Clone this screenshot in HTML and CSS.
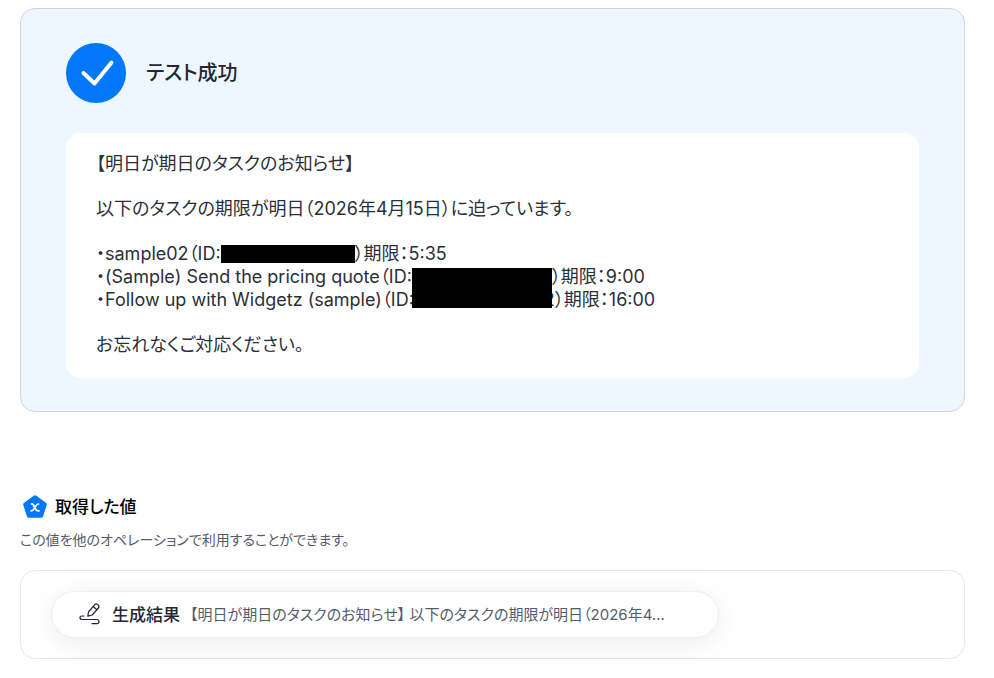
FILE: index.html
```html
<!DOCTYPE html>
<html lang="ja">
<head>
    <meta charset="UTF-8">
    <meta name="viewport" content="width=device-width, initial-scale=1.0">
    <title>テスト結果</title>
    <link rel="stylesheet" href="styles.css">
</head>
<body>
    <main>
        <section class="result">
            <div class="result-head">
                <svg class="icon-check" viewBox="0 0 60 60" aria-hidden="true">
                    <circle cx="30" cy="30" r="30" fill="#0277f7"/>
                    <path d="M17.500 30 L28.500 40.500 L45.500 19.500" fill="none" stroke="#fff" stroke-width="4" stroke-linecap="round" stroke-linejoin="round"/>
                </svg>
                <h1 class="result-title">テスト成功</h1>
            </div>
            <div class="message">
                <p>【明日が期日のタスクのお知らせ】</p>
                <p>以下のタスクの期限が明日（2026年4月15日）に迫っています。</p>
                <ul class="task-list">
                    <li>・sample02（ID:<span class="mask"></span>）期限：5:35</li>
                    <li>・(Sample) Send the pricing quote（ID:<span class="mask mask-top"></span>）期限：9:00</li>
                    <li>・Follow up with Widgetz (sample)（ID:<span class="mask mask-bottom"></span>2）期限：16:00</li>
                </ul>
                <p>お忘れなくご対応ください。</p>
            </div>
        </section>

        <section class="values">
            <h2 class="values-title">
                <svg class="icon-value" viewBox="0 0 26 26" aria-hidden="true">
                    <path d="M13.500 3.500 L23 10.500 L19.500 21.500 H7.500 L4 10.500 Z" fill="#0277f7" stroke="#0277f7" stroke-width="4.500" stroke-linejoin="round"/>
                    <path d="M10 10 C13.500 9 12.500 18.500 17.500 16.800 M17 10 C14 9.500 13 17.500 9.500 16.800" fill="none" stroke="#fff" stroke-width="1.700" stroke-linecap="round"/>
                </svg>
                取得した値
            </h2>
            <p class="values-note">この値を他のオペレーションで利用することができます。</p>
            <div class="value-box">
                <button type="button" class="value-pill">
                    <svg class="icon-edit" viewBox="0 0 24 24" aria-hidden="true">
                        <path d="M9.500 10 L15.500 2.800 Q17 1.200 18.800 2.600 Q20.800 4.200 19.400 6 L13.200 13 L8.800 14.200 Z M14.200 4.500 L17.900 7.700 M5 14 H3 Q1 14 1 15.800 Q1 17.500 3 17.500 H18 Q20 17.500 20 19.500 Q20 21.700 18 21.700 H13"/>
                    </svg>
                    <span class="value-name">生成結果</span>
                    <span class="value-text">【明日が期日のタスクのお知らせ】 以下のタスクの期限が明日（2026年4...</span>
                </button>
            </div>
        </section>
    </main>
</body>
</html>
```
FILE: styles.css
```css
* {
    box-sizing: border-box;
}

body {
    margin: 0;
    background-color: #fff;
    color: #23272f;
    font-family: Inter, "Noto Sans CJK JP", sans-serif;
    font-feature-settings: "palt";
}

main {
    padding: 8px 29px 19px 20px;
}

h1,
h2,
p,
ul {
    margin: 0;
}

.result {
    padding: 34px 45px 33px;
    border: 1px solid #cbd5e1;
    border-radius: 15px;
    background-color: #eef7ff;
}

.result-head {
    display: flex;
    align-items: center;
    gap: 20px;
    margin-bottom: 30px;
}

.icon-check {
    width: 60px;
    height: 60px;
}

.result-title {
    font-size: 20px;
    font-weight: 500;
    line-height: 26px;
}

.message {
    display: grid;
    gap: 22px;
    padding: 19px 30px 22px;
    border-radius: 15px;
    background-color: #fff;
    color: #2b3038;
    font-size: 18px;
    line-height: 23px;
}

.task-list {
    padding: 0;
    list-style: none;
}

/* IDの伏せ字 */
.mask {
    display: inline-block;
    position: relative;
    width: 134px;
    height: 18px;
    margin-top: 3px;
    background-color: #000;
    vertical-align: top;
}

/* 2行分をつなげて見せる */
.mask-top {
    width: 140px;
    height: 20px;
}

.mask-bottom {
    width: 140px;
    height: 20px;
    margin: 0 -8px 0 -2px;
}

.values {
    margin-top: 80px;
}

.values-title {
    display: flex;
    align-items: center;
    gap: 6px;
    color: #000;
    font-size: 17px;
    font-weight: 500;
    line-height: 30px;
}

.icon-value {
    width: 29px;
    height: 26px;
}

.values-note {
    margin-top: 8px;
    color: #545c6b;
    font-size: 14px;
    line-height: 20px;
}

.value-box {
    margin-top: 20px;
    padding: 20px 30px;
    border: 1px solid #e5e7eb;
    border-radius: 15px;
}

.value-pill {
    display: flex;
    align-items: center;
    width: 668px;
    max-width: 100%;
    height: 47px;
    padding: 0 30px 2px 27px;
    border: 1px solid #eceef1;
    border-radius: 24px;
    background-color: #fff;
    box-shadow: 0 5px 30px rgba(0, 0, 0, 0.08);
    color: inherit;
    font: inherit;
    font-feature-settings: inherit;
    text-align: left;
    cursor: pointer;
}

.icon-edit {
    flex: none;
    width: 24px;
    height: 24px;
    margin-right: 9px;
    fill: none;
    stroke: #23272f;
    stroke-width: 1.2;
    stroke-linecap: round;
    stroke-linejoin: round;
}

.value-name {
    flex: none;
    margin-right: 10px;
    font-size: 17px;
    font-weight: 500;
}

.value-text {
    overflow: hidden;
    color: #545c6b;
    font-size: 15px;
    text-overflow: ellipsis;
    white-space: nowrap;
}
```
